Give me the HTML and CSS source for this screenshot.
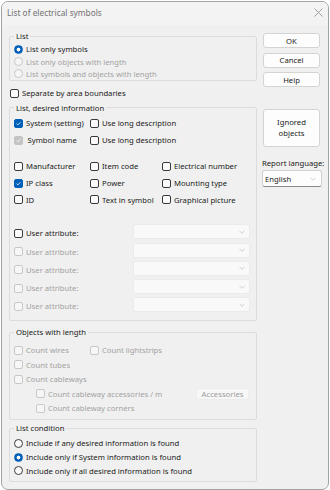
FILE: index.html
```html
<!DOCTYPE html>
<html lang="en">
<head>
    <meta charset="UTF-8">
    <meta name="viewport" content="width=device-width, initial-scale=1.0">
    <title>List of electrical symbols</title>
    <link rel="stylesheet" href="styles.css">
</head>
<body>
    <div class="dialog">
        <!-- Title bar -->
        <div class="titlebar">
            <span class="title">List of electrical symbols</span>
            <svg class="close" width="9" height="9" viewBox="0 0 9 9" fill="none" stroke="currentColor" stroke-width="0.9">
                <path d="M0.5 0.5L8.5 8.5M8.5 0.5L0.5 8.5"/>
            </svg>
        </div>

        <div class="dialog-body">
            <div class="main">
                <!-- List -->
                <fieldset class="group group-list">
                    <legend>List</legend>
                    <label class="row"><span class="radio checked"></span>List only symbols</label>
                    <label class="row disabled"><span class="radio"></span>List only objects with length</label>
                    <label class="row disabled"><span class="radio"></span>List symbols and objects with length</label>
                </fieldset>

                <label class="row separate"><span class="cb"></span>Separate by area boundaries</label>

                <!-- Desired information -->
                <fieldset class="group group-info">
                    <legend>List, desired information</legend>
                    <div class="info-grid info-top">
                        <label class="item"><span class="cb checked"><svg viewBox="0 0 9 9"><path d="M2 4.6L3.7 6.3L7 2.8"/></svg></span>System (setting)</label>
                        <label class="item"><span class="cb"></span>Use long description</label>
                        <label class="item symbol-name"><span class="cb checked disabled"><svg viewBox="0 0 9 9"><path d="M2 4.6L3.7 6.3L7 2.8"/></svg></span>Symbol name</label>
                        <label class="item"><span class="cb"></span>Use long description</label>
                    </div>
                    <div class="info-grid info-mid">
                        <label class="item"><span class="cb"></span>Manufacturer</label>
                        <label class="item"><span class="cb"></span>Item code</label>
                        <label class="item"><span class="cb"></span>Electrical number</label>
                        <label class="item"><span class="cb checked"><svg viewBox="0 0 9 9"><path d="M2 4.6L3.7 6.3L7 2.8"/></svg></span>IP class</label>
                        <label class="item"><span class="cb"></span>Power</label>
                        <label class="item"><span class="cb"></span>Mounting type</label>
                        <label class="item"><span class="cb"></span>ID</label>
                        <label class="item"><span class="cb"></span>Text in symbol</label>
                        <label class="item"><span class="cb"></span>Graphical picture</label>
                    </div>
                    <div class="attrs">
                        <div class="attr-row">
                            <label class="item"><span class="cb"></span>User attribute:</label>
                            <span class="combo"><svg viewBox="0 0 7 4"><path d="M0.5 0.5L3.5 3.5L6.5 0.5"/></svg></span>
                        </div>
                        <div class="attr-row">
                            <label class="item disabled"><span class="cb"></span>User attribute:</label>
                            <span class="combo"><svg viewBox="0 0 7 4"><path d="M0.5 0.5L3.5 3.5L6.5 0.5"/></svg></span>
                        </div>
                        <div class="attr-row">
                            <label class="item disabled"><span class="cb"></span>User attribute:</label>
                            <span class="combo"><svg viewBox="0 0 7 4"><path d="M0.5 0.5L3.5 3.5L6.5 0.5"/></svg></span>
                        </div>
                        <div class="attr-row">
                            <label class="item disabled"><span class="cb"></span>User attribute:</label>
                            <span class="combo"><svg viewBox="0 0 7 4"><path d="M0.5 0.5L3.5 3.5L6.5 0.5"/></svg></span>
                        </div>
                        <div class="attr-row">
                            <label class="item disabled"><span class="cb"></span>User attribute:</label>
                            <span class="combo"><svg viewBox="0 0 7 4"><path d="M0.5 0.5L3.5 3.5L6.5 0.5"/></svg></span>
                        </div>
                    </div>
                </fieldset>

                <!-- Objects with length -->
                <fieldset class="group group-objects">
                    <legend>Objects with length</legend>
                    <div class="obj-row">
                        <label class="item disabled obj-first"><span class="cb"></span>Count wires</label>
                        <label class="item disabled"><span class="cb"></span>Count lightstrips</label>
                    </div>
                    <div class="obj-row">
                        <label class="item disabled"><span class="cb"></span>Count tubes</label>
                    </div>
                    <div class="obj-row">
                        <label class="item disabled"><span class="cb"></span>Count cableways</label>
                    </div>
                    <div class="obj-row indent">
                        <label class="item disabled"><span class="cb"></span>Count cableway accessories / m</label>
                        <span class="btn btn-small">Accessories</span>
                    </div>
                    <div class="obj-row indent">
                        <label class="item disabled"><span class="cb"></span>Count cableway corners</label>
                    </div>
                </fieldset>

                <!-- List condition -->
                <fieldset class="group group-cond">
                    <legend>List condition</legend>
                    <label class="row"><span class="radio"></span>Include if any desired information is found</label>
                    <label class="row"><span class="radio checked"></span>Include only if System information is found</label>
                    <label class="row"><span class="radio"></span>Include only if all desired information is found</label>
                </fieldset>
            </div>

            <div class="side">
                <span class="btn">OK</span>
                <span class="btn">Cancel</span>
                <span class="btn">Help</span>
                <span class="btn btn-tall">Ignored<br>objects</span>
                <div class="lang-label">Report language:</div>
                <span class="select">English<svg viewBox="0 0 7 4"><path d="M0.5 0.5L3.5 3.5L6.5 0.5"/></svg></span>
            </div>
        </div>
    </div>
</body>
</html>
```

FILE: styles.css
```css
* {
    box-sizing: border-box;
}

body {
    margin: 0;
    background-color: #fff;
    font-family: 'Noto Sans', sans-serif;
    font-size: 7.7px;
    color: #1b1b1b;
}

/* Window frame */
.dialog {
    margin: 1px 0 0 1px;
    width: 328px;
    height: 489px;
    border: 1px solid #a3a3a3;
    border-radius: 7px;
    background-color: #f0f0f0;
    overflow: hidden;
    display: flex;
    flex-direction: column;
}

.titlebar {
    height: 23px;
    flex: none;
    display: flex;
    align-items: center;
    justify-content: space-between;
    padding: 0 5px 2px 5px;
    background-color: #f3f3f3;
    color: #747474;
    font-size: 8.3px;
}

.close {
    color: #9a9a9a;
}

.dialog-body {
    display: flex;
    gap: 6px;
    padding: 6px 0 0 7px;
}

.main {
    width: 248px;
    display: flex;
    flex-direction: column;
}

/* Group boxes */
.group {
    margin: 0;
    padding: 0 0 0 4px;
    border: 1px solid #dcdcdc;
    border-radius: 2px;
    min-width: 0;
}

.group legend {
    padding: 0 2px;
    line-height: 10px;
    color: #1b1b1b;
}

.group-list {
    padding-top: 2px;
}

.group-info {
    margin-top: 3px;
    padding-top: 2px;
    padding-bottom: 4px;
    padding-right: 6px;
}

.group-objects {
    margin-top: 6.5px;
    padding-top: 5.7px;
    padding-bottom: 3px;
    padding-right: 7px;
}

.group-cond {
    margin-top: 3.5px;
    padding-top: 3px;
    padding-bottom: 3px;
}

/* Rows */
.row {
    display: flex;
    align-items: center;
    height: 12.4px;
    white-space: nowrap;
}

.group-cond .row {
    height: 13.9px;
}

.separate {
    margin: 6px 0 0 1px;
}

.item {
    display: flex;
    align-items: center;
    white-space: nowrap;
}

.disabled {
    color: #a2a2a2;
}

.info-grid {
    display: grid;
    grid-template-columns: 76px 72px 1fr;
}

.info-top {
    grid-template-columns: 76px 1fr;
    grid-template-rows: 17px 17px;
}

.info-mid {
    margin-top: 9.5px;
    grid-template-rows: 16.7px 16.7px 16.7px;
}

.symbol-name .cb {
    margin-right: 4.5px;
}

.attrs {
    margin-top: 16px;
}

.attr-row {
    display: flex;
    align-items: center;
    justify-content: space-between;
    height: 18.3px;
}

.combo {
    width: 117px;
    height: 15px;
    margin-top: -3px;
    background-color: #f9f9f9;
    border: 1px solid #ebebeb;
    border-radius: 2px;
    display: flex;
    align-items: center;
    justify-content: flex-end;
    padding-right: 4px;
}

.combo svg,
.select svg {
    width: 6px;
    height: 4px;
    fill: none;
    stroke: #c3c3c3;
    stroke-width: 0.9;
}

.obj-row {
    display: flex;
    align-items: center;
    height: 14.6px;
}

.obj-first {
    width: 76px;
}

.obj-row.indent {
    padding-left: 22px;
    justify-content: space-between;
}

/* Check boxes and radios */
.cb,
.radio {
    flex: none;
    width: 9px;
    height: 9px;
    margin-right: 3px;
    border: 1px solid #3a3a3a;
    background-color: #fbfbfb;
    display: flex;
    align-items: center;
    justify-content: center;
}

.cb {
    border-radius: 2px;
}

.radio {
    border-radius: 50%;
}

.disabled .cb,
.disabled .radio {
    border-color: #c8c8c8;
    background-color: #f6f6f6;
}

.cb.checked {
    background-color: #005fb8;
    border-color: #005fb8;
}

.cb.checked.disabled {
    background-color: #c4c4c4;
    border-color: #c4c4c4;
}

.cb svg {
    width: 9px;
    height: 9px;
    fill: none;
    stroke: #fff;
    stroke-width: 1;
}

.radio.checked {
    border-color: #005fb8;
    background: radial-gradient(circle, #fff 0 1.7px, #005fb8 2.2px);
}

/* Buttons */
.side {
    width: 57px;
    padding-top: 2px;
    display: flex;
    flex-direction: column;
}

.btn {
    display: flex;
    align-items: center;
    justify-content: center;
    height: 15px;
    background-color: #fdfdfd;
    border: 1px solid #d4d4d4;
    border-radius: 3px;
    text-align: center;
    margin-bottom: 4.7px;
}

.btn-tall {
    height: 38px;
    margin-top: 17px;
    line-height: 11px;
}

.btn-small {
    width: 53px;
    height: 12px;
    margin: 0;
    background-color: #f7f7f7;
    border-color: #ececec;
    color: #9c9c9c;
}

.lang-label {
    margin-top: 6.3px;
    margin-left: -1px;
    line-height: 10px;
    white-space: nowrap;
}

.select {
    margin: 2px 0 0 -1px;
    width: 60px;
    height: 17px;
    background-color: #fdfdfd;
    border: 1px solid #d0d0d0;
    border-bottom-color: #8a8a8a;
    border-radius: 3px;
    display: flex;
    align-items: center;
    justify-content: space-between;
    padding: 0 5px 0 2px;
}
```
